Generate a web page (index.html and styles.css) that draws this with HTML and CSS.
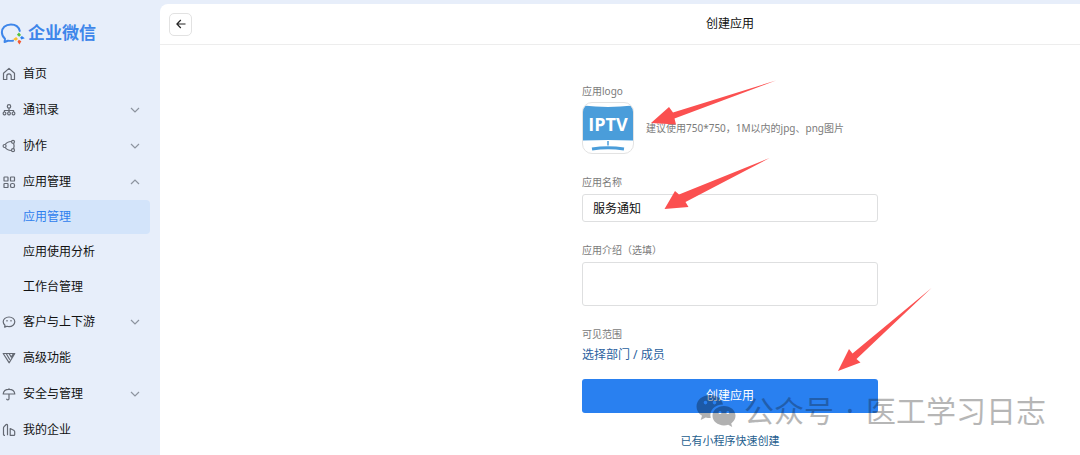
FILE: index.html
```html
<!DOCTYPE html>
<html lang="zh-CN">
<head>
<meta charset="utf-8">
<meta name="viewport" content="width=device-width, initial-scale=1">
<title>创建应用</title>
<link rel="stylesheet" href="styles.css">
</head>
<body>
<div class="app">
  <aside class="sidebar">
    <div class="brand">
      <svg class="brand-mark" viewBox="0 0 24 22" aria-hidden="true">
        <path d="M19 8.500C18 4.500 14.500 2.300 10.500 2.300C5 2.300 1.800 5.700 1.800 9.900C1.800 12.600 3 14.600 4.800 16L4.400 19.200L7.600 18Q10 18.200 12.500 17.900" fill="none" stroke="#3e86ea" stroke-width="1.900" stroke-linejoin="round" stroke-linecap="round"/>
        <path d="M18.200 10l2 2.400-1.800 1.800-2.200-2z" fill="#54c23d"/>
        <path d="M23.800 15.500l-3.400 1.300-1-2 1.600-1.400z" fill="#2f80ee"/>
        <path d="M18.700 21.500l-1.900-2.500 1.200-2 2.500 1.500z" fill="#f35b32"/>
        <path d="M12.500 16.500l3-2.200 1.800 2-2 1.700z" fill="#fcbd2d"/>
      </svg>
      <span class="brand-name">企业微信</span>
    </div>
    <nav>
      <ul class="menu">
        <li><a class="item" href="#"><svg class="icon" viewBox="0 0 14 14"><path d="M1.500 12.500V6.200L7 1.400l5.500 4.800v6.300H9.200V9a2.200 2.200 0 0 0-4.400 0v3.500z"/></svg><span>首页</span></a></li>
        <li><a class="item" href="#"><svg class="icon" viewBox="0 0 14 14"><circle cx="7" cy="3.400" r="1.700"/><path d="M7 5.200v2.300M2.400 9V7.500h9.200V9M7 7.500V9"/><rect x="1.200" y="9" width="2.600" height="2.800" rx="1"/><rect x="5.700" y="9" width="2.600" height="2.800" rx="1"/><rect x="10.200" y="9" width="2.600" height="2.800" rx="1"/></svg><span>通讯录</span><svg class="chevron" viewBox="0 0 10 6"><path d="M1 1l4 4 4-4"/></svg></a></li>
        <li><a class="item" href="#"><svg class="icon" viewBox="0 0 14 14"><circle cx="2.600" cy="7" r="1.500"/><circle cx="11" cy="2.800" r="1.500"/><circle cx="11" cy="11.200" r="1.500"/><path d="M3.200 5.500Q4.800 2.800 9.500 2.500M3.200 8.500Q4.800 11.200 9.500 11.500M11.600 4.300q1 2.700 0 5.400"/></svg><span>协作</span><svg class="chevron" viewBox="0 0 10 6"><path d="M1 1l4 4 4-4"/></svg></a></li>
        <li>
          <a class="item" href="#"><svg class="icon" viewBox="0 0 14 14"><rect x="2" y="2" width="4" height="4" rx=".6"/><rect x="8.500" y="2" width="4" height="4" rx=".6"/><rect x="2" y="8.500" width="4" height="4" rx=".6"/><rect x="8.500" y="8.500" width="4" height="4" rx="1.600"/></svg><span>应用管理</span><svg class="chevron" viewBox="0 0 10 6"><path d="M1 5l4-4 4 4"/></svg></a>
          <ul class="submenu">
            <li><a class="subitem active" href="#" aria-current="page">应用管理</a></li>
            <li><a class="subitem" href="#">应用使用分析</a></li>
            <li><a class="subitem" href="#">工作台管理</a></li>
          </ul>
        </li>
        <li><a class="item" href="#"><svg class="icon" viewBox="0 0 14 14"><path d="M2.700 12.200l.3-2C1.800 9.300 1.200 8.200 1.200 6.800c0-2.700 2.600-4.800 5.800-4.800s5.800 2.100 5.800 4.800-2.600 4.800-5.800 4.800q-1 0-2-.4z"/><path d="M5 5v1.500M9 5v1.500"/></svg><span>客户与上下游</span><svg class="chevron" viewBox="0 0 10 6"><path d="M1 1l4 4 4-4"/></svg></a></li>
        <li><a class="item" href="#"><svg class="icon" viewBox="0 0 14 14"><path d="M1.200 2.500h11.600L7.200 11.800zM4.200 2.500l3.600 6.200M7 2.500l2.300 3.600 2-3.400"/></svg><span>高级功能</span></a></li>
        <li><a class="item" href="#"><svg class="icon" viewBox="0 0 14 14"><path d="M1.200 7C1.500 4 4 2.400 7 2.400S12.500 4 12.800 7zM7 1.300v1M7 7v4.700q0 1.200-1.200 1.200T4.600 11.800"/></svg><span>安全与管理</span><svg class="chevron" viewBox="0 0 10 6"><path d="M1 1l4 4 4-4"/></svg></a></li>
        <li><a class="item" href="#"><svg class="icon" viewBox="0 0 14 14"><path d="M3 12.300H2.400q-.9 0-.9-.9V5q0-.8.6-1.400L4.200 1.500q1.300-.6 1.300.8v10M8.200 12.300V5.500l3.500 1.700q1 .6 1 1.600v2.600q0 .9-.9.9z"/></svg><span>我的企业</span></a></li>
      </ul>
    </nav>
  </aside>

  <main class="panel">
    <header class="topbar">
      <button class="back" type="button" aria-label="返回"><svg viewBox="0 0 10 10"><path d="M9.500 5H1M4.800 1L.9 5l3.900 4"/></svg></button>
      <h1 class="title">创建应用</h1>
    </header>
    <div class="content">
      <form class="form">
        <section class="field logo-field">
          <span class="label">应用logo</span>
          <div class="logo-row">
            <button class="logo" type="button" aria-label="更换应用logo">
              <svg viewBox="0 0 50 50">
                <path d="M-1 2.500Q25 5.500 51 2.500V37.500Q25 36.500-1 37.500z" fill="#4a9dda"/>
                <path d="M25 38v4.500" stroke="#4a9dda" stroke-width="1.500"/>
                <path d="M9 46Q25 43.500 41 46" fill="none" stroke="#4a9dda" stroke-width="3"/>
                <text class="logo-text" x="25" y="28" text-anchor="middle">IPTV</text>
              </svg>
            </button>
            <p class="hint">建议使用750*750，1M以内的jpg、png图片</p>
          </div>
        </section>
        <div class="field">
          <label class="label" for="name">应用名称</label>
          <input class="control" id="name" type="text" value="服务通知">
        </div>
        <div class="field">
          <label class="label" for="intro">应用介绍（选填）</label>
          <textarea class="control area" id="intro"></textarea>
        </div>
        <section class="field scope">
          <span class="label">可见范围</span>
          <a class="pick" href="#">选择部门 / 成员</a>
        </section>
        <button class="submit" type="button">创建应用</button>
        <a class="quick" href="#">已有小程序快速创建</a>
      </form>
    </div>
  </main>

  <svg class="arrows" viewBox="0 0 300 310" aria-hidden="true">
    <path d="M146 0.500L43 32.500 39 27 21 43 46 44.500 44.500 38.500z"/>
    <path d="M139.500 78L49 114.500 45 111 34.500 129 58.500 127 55.500 122z"/>
    <path d="M301.500 208L222.500 273.500 219 269 208 291 230.500 282.500 226.500 279z"/>
  </svg>
  <div class="watermark" aria-hidden="true">
    <svg viewBox="0 0 40 34"><path fill-rule="evenodd" d="M27 10.500C26 5 20.500 1 14 1 6.500 1 .5 6 .5 12.500c0 4 2 7 5.500 9.300L4.700 26l5-2.600q2.400.7 5 .6C13 16 19 10.500 27 10.500zM9.500 6.800a1.800 1.800 0 1 1 0 3.600 1.800 1.800 0 0 1 0-3.600zm9 0a1.800 1.800 0 1 1 0 3.600 1.800 1.800 0 0 1 0-3.600z"/><path fill-rule="evenodd" d="M28 12c6.500 0 11.500 4.300 11.500 9.800 0 3.200-1.600 5.700-4.300 7.600l1 3.500-4-2.100q-2 .6-4.200.6c-6.500 0-11.500-4.200-11.500-9.600S21.500 12 28 12zm-4 5a1.500 1.500 0 1 0 0 3 1.500 1.500 0 0 0 0-3zm7.800 0a1.500 1.500 0 1 0 0 3 1.500 1.500 0 0 0 0-3z"/></svg>
    <span class="watermark-text"><span>公众号</span><span>·</span><span>医工学习日志</span></span>
  </div>
</div>
</body>
</html>
```
FILE: styles.css
```css
* {
  box-sizing: border-box;
}

body {
  margin: 0;
  background: #e7eefa;
  color: #111;
  font: 12px/18px "Noto Sans", "Noto Sans CJK SC", sans-serif;
}

a {
  color: inherit;
  text-decoration: none;
}

ul {
  margin: 0;
  padding: 0;
  list-style: none;
}

button,
input,
textarea {
  margin: 0;
  font: inherit;
}

.app {
  position: relative;
  display: flex;
  min-height: 100vh;
  overflow: hidden;
}

/* Sidebar */
.sidebar {
  flex: none;
  width: 160px;
  padding: 21px 10px 0 0;
}

.brand {
  display: flex;
  align-items: center;
  gap: 3px;
  height: 24px;
  margin-bottom: 11px;
}

.brand-mark {
  width: 25px;
  height: 23px;
}

.brand-name {
  color: #3e86ea;
  font-size: 17px;
  font-weight: 700;
  line-height: 24px;
}

.item,
.subitem {
  display: flex;
  align-items: center;
}

.item {
  gap: 7px;
  height: 36px;
  padding: 0 10px 0 2px;
}

.icon {
  width: 14px;
  height: 14px;
  fill: none;
  stroke: #646973;
  stroke-width: 1.2;
  stroke-linejoin: round;
}

.chevron {
  width: 10px;
  height: 6px;
  margin-left: auto;
  fill: none;
  stroke: #8d949f;
  stroke-width: 1.2;
}

.submenu {
  display: grid;
  gap: 1px;
}

.subitem {
  height: 34px;
  padding-left: 23px;
}

.active {
  border-radius: 0 4px 4px 0;
  background: #d3e4fa;
  color: #2f80ee;
}

/* Main panel */
.panel {
  flex: 1;
  margin-top: 4px;
  border-radius: 8px 0 0 0;
  background: #fff;
}

.topbar {
  display: flex;
  align-items: center;
  height: 41px;
  padding-left: 9px;
  border-bottom: 1px solid #ededed;
}

.back {
  display: flex;
  align-items: center;
  justify-content: center;
  width: 23px;
  height: 23px;
  padding: 0;
  border: 1px solid #e2e2e2;
  border-radius: 5px;
  background: #fff;
}

.back svg {
  width: 10px;
  height: 10px;
  fill: none;
  stroke: #222;
  stroke-width: 1.2;
}

.title {
  flex: 1;
  margin: 0 0 0 188px;
  font-size: 12px;
  font-weight: 400;
  text-align: center;
}

.content {
  display: flex;
  justify-content: center;
  padding: 38px 0 0 220px;
}

.form {
  display: flex;
  flex-direction: column;
  width: 296px;
}

.field {
  display: flex;
  flex-direction: column;
  gap: 4px;
  margin-bottom: 20px;
}

.label,
.hint {
  color: #7b7b7b;
  font-size: 10px;
  line-height: 16px;
}

.logo-field {
  gap: 3px;
}

.logo-row {
  display: flex;
  align-items: center;
  gap: 12px;
}

.logo {
  width: 52px;
  height: 52px;
  padding: 0;
  overflow: hidden;
  border: 1px solid #e3e3e3;
  border-radius: 10px;
  background: #fff;
}

.logo svg {
  display: block;
  width: 100%;
}

.logo-text {
  fill: #fff;
  font: 700 18px "Open Sans", sans-serif;
}

.hint {
  margin: 0;
  white-space: nowrap;
}

.control {
  width: 100%;
  height: 28px;
  padding: 0 10px;
  border: 1px solid #dedfe0;
  border-radius: 3px;
  background: #fff;
  color: #111;
}

.area {
  height: 44px;
  resize: none;
}

.scope {
  margin-bottom: 15px;
}

.pick {
  color: #2a5f9e;
}

.submit {
  height: 34px;
  border: 0;
  border-radius: 3px;
  background: #2980f0;
  color: #fff;
}

.quick {
  align-self: center;
  margin-top: 19px;
  color: #255e8e;
  font-size: 11px;
}

/* Overlays */
.arrows {
  position: absolute;
  top: 80px;
  left: 630px;
  width: 300px;
  height: 310px;
  overflow: visible;
  fill: #fb5050;
  pointer-events: none;
}

.watermark {
  position: absolute;
  right: 34px;
  bottom: 22px;
  display: flex;
  align-items: center;
  gap: 8px;
  font-size: 30px;
  line-height: 44px;
  white-space: nowrap;
  opacity: 0.3;
  pointer-events: none;
}

.watermark svg {
  width: 40px;
  height: 34px;
}

.watermark-text {
  display: flex;
  gap: 12px;
}
```
